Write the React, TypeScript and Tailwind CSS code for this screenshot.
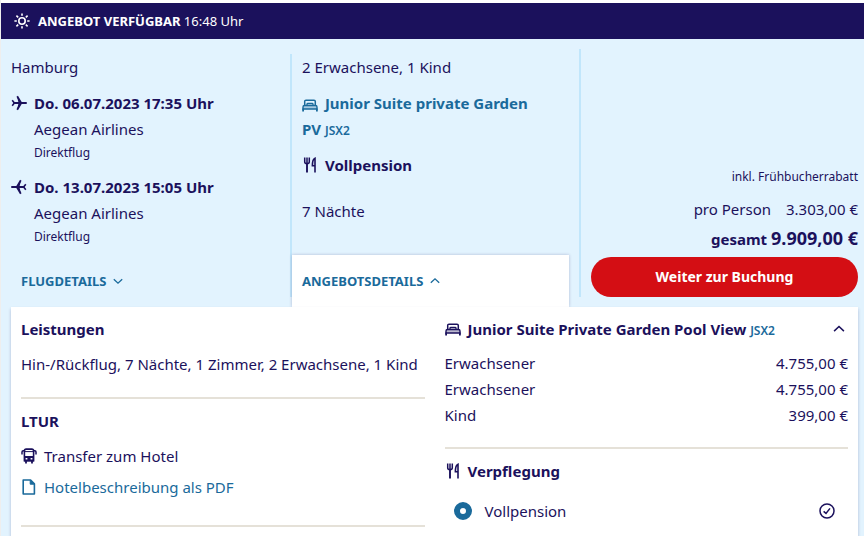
import { useState } from "react";
import type { ReactNode } from "react";

const ROOM_PRICES = [
  { guest: "Erwachsener", price: "4.755,00 €" },
  { guest: "Erwachsener", price: "4.755,00 €" },
  { guest: "Kind", price: "399,00 €" },
];

const FLIGHTS = [
  { date: "Do. 06.07.2023 17:35 Uhr", airline: "Aegean Airlines", info: "Direktflug", back: false },
  { date: "Do. 13.07.2023 15:05 Uhr", airline: "Aegean Airlines", info: "Direktflug", back: true },
];

function SunIcon() {
  return (
    <svg className="h-4 w-4 shrink-0" viewBox="0 0 16 16" fill="none" stroke="currentColor" strokeWidth={1.6} aria-hidden="true">
      <circle cx="8" cy="8" r="3.2" />
      <path d="M8 .4v2.4M8 13.2v2.4M.4 8h2.4M13.2 8h2.4M2.4 2.6l1.8 1.7M11.8 11.7l1.8 1.7M2.4 13.4l1.8-1.7M11.8 4.3l1.8-1.7" />
    </svg>
  );
}

function PlaneIcon({ back }: { back: boolean }) {
  return (
    <svg className={`h-4 w-4 ${back ? "rotate-180" : ""}`} viewBox="0 0 16 16" fill="none" stroke="currentColor" aria-hidden="true">
      <path strokeWidth={2} strokeLinecap="round" d="M3 8h12" />
      <path strokeWidth={1.8} strokeLinejoin="round" d="M6.2 1.2L10.2 8l-4 6.8" />
      <path fill="currentColor" stroke="none" d="M6 1.5L10.5 8 6 14.5 7.6 8z" />
      <path strokeWidth={1.6} d="M1.2 5.2L3.4 8l-2.2 2.8" />
    </svg>
  );
}

function BedIcon() {
  return (
    <svg className="inline h-4 w-4 shrink-0" viewBox="0 0 16 16" fill="none" stroke="currentColor" aria-hidden="true">
      <path strokeWidth={1.5} d="M2.7 8.5V4.5c0-.8.5-1.3 1.3-1.3h8c.8 0 1.3.5 1.3 1.3v4" />
      <path strokeWidth={1.3} d="M5 8.4V7.3c0-.5.3-.8.8-.8h4.4c.5 0 .8.3.8.8v1.1" />
      <path fill="currentColor" fillOpacity={0.3} strokeWidth={1.4} d="M1 12v-2c0-.9.6-1.5 1.5-1.5h11c.9 0 1.5.6 1.5 1.5v2z" />
      <path strokeWidth={1.8} d="M1.1 11.5v3M14.9 11.5v3" />
    </svg>
  );
}

function CutleryIcon() {
  return (
    <svg className="inline h-4 w-4 shrink-0" viewBox="0 0 16 16" fill="none" stroke="currentColor" aria-hidden="true">
      <path strokeWidth={1.5} d="M2.7.6v4.2c0 1.4.7 2 2.3 2s2.3-.6 2.3-2V.6M5 .6V7" />
      <path strokeWidth={1.9} d="M5 6.5v9" />
      <path strokeWidth={1.6} d="M13 15.5V1.2c-1.9.6-2.6 3-2.6 7.6H13" />
    </svg>
  );
}

function BusIcon() {
  return (
    <svg className="h-4 w-4 shrink-0" viewBox="0 0 16 16" fill="none" stroke="currentColor" aria-hidden="true">
      <path strokeWidth={1.6} d="M3.4 12.8V2.8c0-1 .7-1.7 1.8-1.7h5.6c1.1 0 1.8.7 1.8 1.7v10z" />
      <path strokeWidth={1} d="M3.4 3.6h9.2" />
      <path fill="currentColor" stroke="none" d="M3 8h10v5.4H3z" />
      <path stroke="#fff" strokeWidth={1.5} d="M4.6 10.7h1.8M9.6 10.7h1.8" />
      <path strokeWidth={1.8} d="M5 12.8v2.8M11 12.8v2.8" />
      <path strokeWidth={1.5} d="M3.4 2.8H2.2C1.4 2.8 1 3.2 1 4v2.6M12.6 2.8h1.2c.8 0 1.2.4 1.2 1.2v2.6" />
    </svg>
  );
}

function FileIcon() {
  return (
    <svg className="h-4 w-4 shrink-0" viewBox="0 0 16 16" fill="none" stroke="currentColor" strokeWidth={1.6} aria-hidden="true">
      <path strokeLinejoin="round" d="M2.2 1h7.4l3.8 3.8V15H2.2z" />
      <path fill="currentColor" strokeWidth={1} d="M9.2 1.2v4h4z" />
    </svg>
  );
}

function CheckCircleIcon() {
  return (
    <svg className="h-4 w-4" viewBox="0 0 16 16" fill="none" stroke="currentColor" strokeWidth={1.5} aria-hidden="true">
      <circle cx="8" cy="8" r="7" />
      <path d="M4.6 8.4l2.4 2 4-5" />
    </svg>
  );
}

function Chevron({ up, className }: { up: boolean; className: string }) {
  return (
    <svg className={`${className} ${up ? "rotate-180" : ""}`} viewBox="0 0 12 12" fill="none" stroke="currentColor" strokeWidth={1.3} aria-hidden="true">
      <path d="M1.8 4.2L6 8.2l4.2-4" />
    </svg>
  );
}

function TabButton({ label, open, onClick, className }: { label: string; open: boolean; onClick: () => void; className: string }) {
  return (
    <button
      type="button"
      aria-expanded={open}
      onClick={onClick}
      className={`mt-auto mr-[10px] flex h-[52px] items-center gap-[6px] text-[13px] font-bold text-[#1a6a9b] ${className} ${
        open ? "bg-white shadow-[0_0_3px_rgba(27,17,90,0.25)]" : ""
      }`}
    >
      {label}
      <Chevron up={open} className="h-3 w-3" />
    </button>
  );
}

function Heading({ children }: { children: ReactNode }) {
  return <h2 className="flex items-center gap-[7px] font-bold">{children}</h2>;
}

export default function App() {
  const [tab, setTab] = useState("angebot");
  const [roomOpen, setRoomOpen] = useState(true);

  return (
    <div className="min-h-screen border-l border-[#eeeeee] bg-white pt-[3px] font-['Noto_Sans',sans-serif] text-[15px] leading-[26px] text-[#1b115c]">
      <header className="flex h-9 items-center gap-2 bg-[#1b115c] px-[13px] text-[13px] text-white">
        <SunIcon />
        <p>
          <strong className="font-bold">ANGEBOT VERFÜGBAR</strong> 16:48 Uhr
        </p>
      </header>

      <main className="bg-[#e2f3fe]">
        <div className="grid grid-cols-[289fr_2px_287fr_2px_283fr]">
          <section className="flex flex-col pt-[15px]">
            <p className="px-[10px]">Hamburg</p>
            {FLIGHTS.map((flight) => (
              <div key={flight.date} className="mt-[10px] flex gap-[7px] px-[10px]">
                <span className="flex h-[26px] items-center">
                  <PlaneIcon back={flight.back} />
                </span>
                <div>
                  <p className="font-bold">{flight.date}</p>
                  <p>{flight.airline}</p>
                  <p className="text-xs leading-[22px]">{flight.info}</p>
                </div>
              </div>
            ))}
            <TabButton label="FLUGDETAILS" open={tab === "flug"} onClick={() => setTab("flug")} className="ml-[10px] px-[10px]" />
          </section>

          <div className="mt-[15px] mb-[10px] bg-[#c1e6fb]" />

          <section className="flex flex-col pt-[15px]">
            <div className="mb-[31px] px-[10px]">
              <p>2 Erwachsene, 1 Kind</p>
              <div className="mt-[10px] max-w-60 font-bold text-[#1a6a9b]">
                <span className="mr-[3px]">
                  <BedIcon />
                </span>{" "}
                Junior Suite private Garden PV <span className="text-xs leading-none font-semibold">JSX2</span>
              </div>
              <div className="mt-[10px] flex items-center gap-[7px] font-bold">
                <CutleryIcon /> Vollpension
              </div>
              <p className="mt-5">7 Nächte</p>
            </div>
            <TabButton label="ANGEBOTSDETAILS" open={tab === "angebot"} onClick={() => setTab("angebot")} className="px-[10px]" />
          </section>

          <div className="mt-[10px] mb-[10px] bg-[#c1e6fb]" />

          <section className="flex flex-col justify-end pr-[6px] pb-[10px] pl-[10px] text-right">
            <p className="text-xs leading-[26px]">inkl. Frühbucherrabatt</p>
            <p className="mt-[6px] flex justify-end gap-[15px]">
              <span>pro Person</span>
              <span>3.303,00 €</span>
            </p>
            <p className="mt-1 mb-[5px] font-bold">
              gesamt <span className="text-lg leading-none">9.909,00 €</span>
            </p>
            <button type="button" className="h-10 rounded-full bg-[#d40e14] text-sm font-bold text-white">
              Weiter zur Buchung
            </button>
          </section>
        </div>

        <div className="relative mr-[6px] ml-[10px] grid grid-cols-2 gap-5 bg-white px-[10px] pt-[9px] pb-[9px] shadow-[0_2px_3px_rgba(27,17,90,0.25)]">
          <section>
            <Heading>Leistungen</Heading>
            <p className="mt-[9px] whitespace-nowrap">Hin-/Rückflug, 7 Nächte, 1 Zimmer, 2 Erwachsene, 1 Kind</p>
            <hr className="mt-5 mb-[9px] border-t-2 border-[#e5e1d8]" />
            <Heading>LTUR</Heading>
            <p className="mt-[9px] flex items-center gap-[7px]">
              <BusIcon />
              Transfer zum Hotel
            </p>
            <a href="#hotel-pdf" className="mt-[5px] flex items-center gap-[7px] text-[#1a6a9b]">
              <FileIcon />
              Hotelbeschreibung als PDF
            </a>
            <hr className="mt-[25px] border-t-2 border-[#e5e1d8]" />
          </section>

          <section>
            <div className="flex items-center justify-between">
              <Heading>
                <BedIcon />
                <span className="whitespace-nowrap">
                  Junior Suite Private Garden Pool View{" "}
                  <span className="text-xs leading-none font-semibold text-[#1a6a9b]">JSX2</span>
                </span>
              </Heading>
              <button type="button" aria-label="Zimmerpreise anzeigen" aria-expanded={roomOpen} onClick={() => setRoomOpen(!roomOpen)} className="pr-[2px]">
                <Chevron up={roomOpen} className="h-[14px] w-[14px]" />
              </button>
            </div>
            {roomOpen && (
              <table className="mt-2 w-full">
                <tbody>
                  {ROOM_PRICES.map((row, i) => (
                    <tr key={i}>
                      <td className="p-0">{row.guest}</td>
                      <td className="p-0 text-right">{row.price}</td>
                    </tr>
                  ))}
                </tbody>
              </table>
            )}
            <hr className="mt-[19px] mb-[9px] border-t-2 border-[#e5e1d8]" />
            <Heading>
              <CutleryIcon />
              Verpflegung
            </Heading>
            <label className="mt-[14px] flex items-center pr-[13px] pl-[9px]">
              <input
                type="radio"
                name="verpflegung"
                defaultChecked
                className="mr-[13px] h-[18px] w-[18px] appearance-none rounded-full border-[6px] border-[#1a6a9b] bg-white"
              />
              <span className="flex-1">Vollpension</span>
              <CheckCircleIcon />
            </label>
          </section>
        </div>
      </main>
    </div>
  );
}
